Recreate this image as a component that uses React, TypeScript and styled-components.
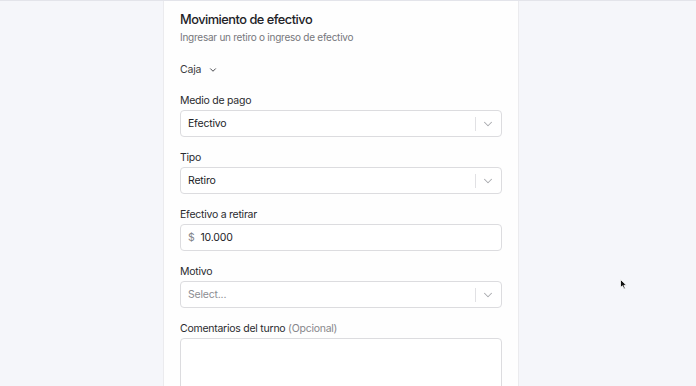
import React from "react";
import styled, { createGlobalStyle } from "styled-components";

const GlobalStyle = createGlobalStyle`
    html, body {
        margin: 0;
        padding: 0;
        background: #f5f6fa;
        font-family: Inter, "Noto Sans", sans-serif;
        color: #1f2024;
    }
    * { box-sizing: border-box; }
`;

const Page = styled.div`
    position: relative;
    min-height: 386px;
    height: 386px;
    overflow: hidden;
    border-top: 1px solid #e3e4ea;
    display: flex;
`;

const Panel = styled.section`
    margin-left: 163px;
    width: 356px;
    background: #fefefe;
    border-left: 1px solid #ebebee;
    border-right: 1px solid #ebebee;
    padding: 10px 16px 0 16px;
    display: flex;
    flex-direction: column;
`;

const Title = styled.h2`
    margin: 0;
    font-size: 12.8px;
    font-weight: 500;
    letter-spacing: -0.5px;
    line-height: 18px;
    color: #222226;
`;

const Subtitle = styled.p`
    margin: 0;
    font-size: 10px;
    letter-spacing: -0.25px;
    line-height: 17px;
    color: #76777c;
`;

const CajaButton = styled.div`
    display: flex;
    align-items: center;
    gap: 7px;
    margin: 17px 0 18px;
    height: 18px;
    font-size: 10.5px;
    letter-spacing: -0.2px;
    color: #3b3c40;
`;

const Field = styled.div`
    display: flex;
    flex-direction: column;
    gap: 2px;
    margin-bottom: 14px;
`;

const Label = styled.label`
    font-size: 10.5px;
    letter-spacing: -0.25px;
    line-height: 14px;
    color: #2a2b2f;
`;

const Muted = styled.span`
    color: #87878b;
`;

const Control = styled.div`
    height: 27px;
    border: 1px solid #dcdcdf;
    border-radius: 4px;
    background: #fff;
    display: flex;
    align-items: center;
    padding-left: 7px;
    font-size: 10.5px;
    letter-spacing: -0.2px;
`;

const Value = styled.span<{ $placeholder?: boolean }>`
    flex: 1;
    color: ${p => (p.$placeholder ? "#8c8d92" : "#222327")};
`;

const Prefix = styled.span`
    color: #85868b;
    margin-right: 6px;
`;

const Indicator = styled.div`
    display: flex;
    align-items: center;
    height: 100%;
    padding: 0 6px 0 0;
`;

const Sep = styled.span`
    width: 1px;
    height: 14px;
    background: #e1e1e4;
    margin-right: 5px;
`;

const TextArea = styled.div`
    height: 60px;
    border: 1px solid #dcdcdf;
    border-radius: 4px;
    background: #fff;
`;

const Cursor = styled.svg`
    position: absolute;
    left: 620px;
    top: 278px;
`;

const Chevron = ({ color = "#a9aaae", size = 14, width = 1.8 }: { color?: string; size?: number; width?: number }) => (
    <svg width={size} height={size} viewBox="0 0 24 24" fill="none" stroke={color} strokeWidth={width} strokeLinecap="round" strokeLinejoin="round">
        <path d="M6 9l6 6 6-6" />
    </svg>
);

function SelectField({ label, value, placeholder }: { label: string; value?: string; placeholder?: string }) {
    return (
        <Field>
            <Label>{label}</Label>
            <Control>
                <Value $placeholder={!value}>{value || placeholder}</Value>
                <Indicator>
                    <Sep />
                    <Chevron />
                </Indicator>
            </Control>
        </Field>
    );
}

export default function App() {
    return (
        <>
            <GlobalStyle />
            <Page>
                <Panel>
                    <Title>Movimiento de efectivo</Title>
                    <Subtitle>Ingresar un retiro o ingreso de efectivo</Subtitle>
                    <CajaButton>
                        Caja <Chevron color="#4a4b50" size={10} width={2.4} />
                    </CajaButton>
                    <SelectField label="Medio de pago" value="Efectivo" />
                    <SelectField label="Tipo" value="Retiro" />
                    <Field>
                        <Label>Efectivo a retirar</Label>
                        <Control>
                            <Prefix>$</Prefix>
                            <Value>10.000</Value>
                        </Control>
                    </Field>
                    <SelectField label="Motivo" placeholder="Select..." />
                    <Field>
                        <Label>
                            Comentarios del turno <Muted>(Opcional)</Muted>
                        </Label>
                        <TextArea />
                    </Field>
                </Panel>
                <Cursor width="8" height="11" viewBox="0 0 8 11">
                    <path d="M0.5 0.5 L0.5 8.5 L2.5 6.8 L4 10 L5.3 9.4 L3.9 6.3 L6.5 6.3 Z" fill="#111" stroke="#fff" strokeWidth="0.8" />
                </Cursor>
            </Page>
        </>
    );
}
